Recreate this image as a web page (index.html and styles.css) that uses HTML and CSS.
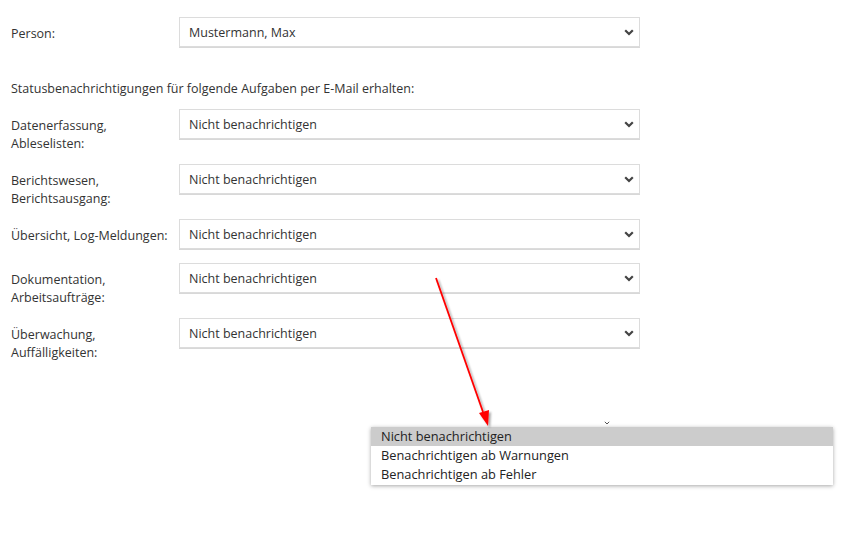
FILE: index.html
```html
<!DOCTYPE html>
<html lang="de">
<head>
<meta charset="utf-8">
<link rel="stylesheet" href="styles.css">
</head>
<body>
<div class="page">
  <div class="row row-person">
    <div class="label">Person:</div>
    <div class="select"><span class="value">Mustermann, Max</span><svg class="chev" viewBox="0 0 10 7" width="10" height="7"><path d="M1.2 1.2 L5 5 L8.8 1.2" fill="none" stroke="#444" stroke-width="2.2"/></svg></div>
  </div>
  <p class="intro">Statusbenachrichtigungen für folgende Aufgaben per E-Mail erhalten:</p>
  <div class="row two">
    <div class="label">Datenerfassung,<br>Ableselisten:</div>
    <div class="select"><span class="value">Nicht benachrichtigen</span><svg class="chev" viewBox="0 0 10 7" width="10" height="7"><path d="M1.2 1.2 L5 5 L8.8 1.2" fill="none" stroke="#444" stroke-width="2.2"/></svg></div>
  </div>
  <div class="row two">
    <div class="label">Berichtswesen,<br>Berichtsausgang:</div>
    <div class="select"><span class="value">Nicht benachrichtigen</span><svg class="chev" viewBox="0 0 10 7" width="10" height="7"><path d="M1.2 1.2 L5 5 L8.8 1.2" fill="none" stroke="#444" stroke-width="2.2"/></svg></div>
  </div>
  <div class="row">
    <div class="label">Übersicht, Log-Meldungen:</div>
    <div class="select"><span class="value">Nicht benachrichtigen</span><svg class="chev" viewBox="0 0 10 7" width="10" height="7"><path d="M1.2 1.2 L5 5 L8.8 1.2" fill="none" stroke="#444" stroke-width="2.2"/></svg></div>
  </div>
  <div class="row two">
    <div class="label">Dokumentation,<br>Arbeitsaufträge:</div>
    <div class="select"><span class="value">Nicht benachrichtigen</span><svg class="chev" viewBox="0 0 10 7" width="10" height="7"><path d="M1.2 1.2 L5 5 L8.8 1.2" fill="none" stroke="#444" stroke-width="2.2"/></svg></div>
  </div>
  <div class="row two">
    <div class="label">Überwachung,<br>Auffälligkeiten:</div>
    <div class="select"><span class="value">Nicht benachrichtigen</span><svg class="chev" viewBox="0 0 10 7" width="10" height="7"><path d="M1.2 1.2 L5 5 L8.8 1.2" fill="none" stroke="#444" stroke-width="2.2"/></svg></div>
  </div>
</div>

<svg class="caron" viewBox="0 0 6 4" width="6" height="4"><path d="M0.8 0.8 L3 3 L5.2 0.8" fill="none" stroke="#555" stroke-width="1"/></svg>

<ul class="dropdown">
  <li class="selected">Nicht benachrichtigen</li>
  <li>Benachrichtigen ab Warnungen</li>
  <li>Benachrichtigen ab Fehler</li>
</ul>

<svg class="arrow" width="80" height="170" viewBox="0 0 80 170">
  <defs>
    <filter id="sh" x="-50%" y="-50%" width="200%" height="200%">
      <feGaussianBlur in="SourceAlpha" stdDeviation="1.2"/>
      <feOffset dx="2" dy="2" result="b"/>
      <feComponentTransfer><feFuncA type="linear" slope="0.35"/></feComponentTransfer>
      <feMerge><feMergeNode/><feMergeNode in="SourceGraphic"/></feMerge>
    </filter>
  </defs>
  <g filter="url(#sh)">
    <line x1="15" y1="18" x2="62" y2="152" stroke="#ff0000" stroke-width="1.8"/>
    <polygon points="58,153 68,150 67,166" fill="#ff0000"/>
  </g>
</svg>
</body>
</html>
```
FILE: styles.css
```css
html, body {
  margin: 0;
  padding: 0;
  background: #fff;
}
body {
  font-family: "Open Sans", "Noto Sans", sans-serif;
  font-size: 12.5px;
  color: #333;
  position: relative;
  width: 860px;
  height: 553px;
  overflow: hidden;
}
.page {
  padding: 17px 0 0 11px;
}
.row {
  display: flex;
  align-items: flex-start;
  margin-bottom: 14px;
}
.row-person {
  margin-bottom: 33px;
}
.label {
  width: 168px;
  flex: none;
  line-height: 18px;
  padding-top: 8px;
}
.row.two .label {
  margin-bottom: -3px;
}
.row-person .label {
  margin-bottom: -1px;
}
.select {
  box-sizing: border-box;
  width: 461px;
  height: 30px;
  border: 1px solid #dcdcdc;
  box-shadow: 0 1px 0 #d8d8d8;
  display: flex;
  align-items: center;
  justify-content: space-between;
  padding: 0 0 0 9px;
  color: #333;
  background: #fff;
}
.select .value {
  line-height: 18px;
  padding-top: 2px;
}
.chev {
  margin-right: 5px;
}
.intro {
  margin: 0 0 11px 0;
  line-height: 18px;
}
.caron {
  position: absolute;
  left: 604px;
  top: 421px;
}
.dropdown {
  position: absolute;
  left: 371px;
  top: 427px;
  width: 462px;
  margin: 0;
  padding: 0 0 1px 0;
  list-style: none;
  background: #fff;
  box-shadow: 0 1px 4px rgba(0,0,0,0.35);
  font-size: 12.8px;
  color: #222;
}
.dropdown li {
  height: 19px;
  line-height: 19px;
  padding-left: 10px;
}
.dropdown li.selected {
  background: #cccccc;
}
.arrow {
  position: absolute;
  left: 421px;
  top: 260px;
}
```
